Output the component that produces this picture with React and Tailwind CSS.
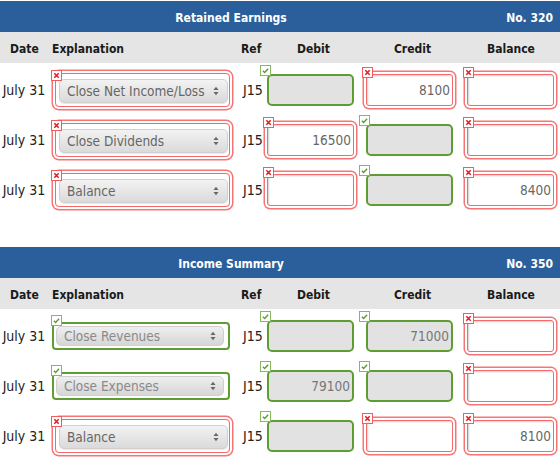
import React from "react";

const FONT = { fontFamily: '"DejaVu Sans Condensed", "DejaVu Sans", Verdana, sans-serif' };

function Badge({ ok, className }) {
  return (
    <span
      className={`absolute z-10 w-[11px] h-[11px] bg-white border flex items-center justify-center ${
        ok ? "border-[#86b85c]" : "border-[#f25c5c]"
      } ${className}`}
    >
      {ok ? (
        <svg viewBox="0 0 8 8" width="7" height="7">
          <path d="M1 4.3 L3 6.2 L7 2" stroke="#5b9a2e" strokeWidth="1.6" fill="none" />
        </svg>
      ) : (
        <svg viewBox="0 0 8 8" width="7" height="7">
          <path d="M1.5 1.5 L6.5 6.5 M6.5 1.5 L1.5 6.5" stroke="#e4161b" strokeWidth="1.7" fill="none" />
        </svg>
      )}
    </span>
  );
}

function Field({ ok, value }) {
  if (ok) {
    return (
      <div className="relative w-[87px] h-[32px]">
        <div className="w-full h-full rounded-[5px] border-2 border-[#5e9d31] bg-[#e2e2e2] flex items-center justify-end pr-[2px] text-[13.5px] text-[#777]">
          {value}
        </div>
        <Badge ok className="-left-[7px] -top-[9px]" />
      </div>
    );
  }
  return (
    <div className="relative w-[87px] h-[32px]">
      <div className="w-full h-full rounded-[3px] border border-[#f46a6a] bg-white shadow-[0_0_0_2px_#fff,0_0_0_3.5px_#f87474,inset_1px_1px_2px_rgba(0,0,0,0.18)] flex items-center justify-end pr-[2px] text-[13.5px] text-[#666]">
        {value}
      </div>
      <Badge className="-left-[4px] -top-[7px]" />
    </div>
  );
}

function Arrows() {
  return (
    <svg width="6" height="10" viewBox="0 0 6 10" className="shrink-0">
      <path d="M0.5 4 L3 0.8 L5.5 4 Z" fill="#666" />
      <path d="M0.5 6 L3 9.2 L5.5 6 Z" fill="#666" />
    </svg>
  );
}

function Select({ ok, text }) {
  if (ok) {
    return (
      <div className="relative w-[178px] h-[28px] rounded-[4px] border-2 border-[#5e9d31] p-[2px] pl-[2px] pr-[4px]">
        <div className="w-[168px] h-[20px] rounded-[5px] bg-gradient-to-b from-[#efefef] to-[#d6d6d6] border border-[#cfcfcf] flex items-center justify-between pl-[7px] pr-[7px] text-[13.5px] text-[#8a8a8a]">
          <span>{text}</span>
          <Arrows />
        </div>
        <Badge ok className="-left-[3px] -top-[9px]" />
      </div>
    );
  }
  return (
    <div className="relative ml-[3px] w-[175px] h-[34px] rounded-[4px] border border-[#f46a6a] shadow-[0_0_0_2px_#fff,0_0_0_3.5px_#f87474] pl-[3px] pt-[5px]">
      <div className="w-[169px] h-[24px] rounded-[5px] bg-gradient-to-b from-[#f3f3f3] to-[#dadada] border border-[#d0d0d0] shadow-[0_1px_1px_rgba(0,0,0,0.1)] flex items-center justify-between pl-[7px] pr-[8px] text-[13.5px] text-[#666]">
        <span>{text}</span>
        <Arrows />
      </div>
      <Badge className="-left-[5px] -top-[4px]" />
    </div>
  );
}

const GRID = "grid grid-cols-[52px_186px_26px_99px_99px_98px]";

function Row({ exp, debit, credit, balance }) {
  return (
    <div className={`${GRID} h-[50px] items-center`}>
      <div className="pr-[4px] text-center text-[14px] text-[#222] whitespace-nowrap">July 31</div>
      <div>
        <Select ok={exp.ok} text={exp.text} />
      </div>
      <div className="pl-[5px] text-[14px] text-[#222]">J15</div>
      <div className="pl-[3px]">
        <Field {...debit} />
      </div>
      <div className="pl-[3px]">
        <Field {...credit} />
      </div>
      <div className="pl-[5px]">
        <Field {...balance} />
      </div>
    </div>
  );
}

function Table({ title, no, rows, className }) {
  return (
    <div className={className}>
      <div className="h-[31px] bg-[#2b5f9b] flex items-center pt-[3px] text-white font-bold text-[12px]">
        <div className="w-[462px] text-center">{title}</div>
        <div className="flex-1 text-right pr-[7px]">{no}</div>
      </div>
      <div className={`${GRID} h-[31px] pt-[3px] bg-[#e5e5e5] items-center font-bold text-[12px] text-[#1a1a1a]`}>
        <div className="pl-[10px]">Date</div>
        <div>Explanation</div>
        <div className="pl-[3px]">Ref</div>
        <div className="text-center">Debit</div>
        <div className="text-center">Credit</div>
        <div className="text-center">Balance</div>
      </div>
      <div className="pt-[2px]">
        {rows.map((r, i) => (
          <Row key={i} {...r} />
        ))}
      </div>
    </div>
  );
}

export default function App() {
  const t1 = [
    {
      exp: { ok: false, text: "Close Net Income/Loss" },
      debit: { ok: true, value: "" },
      credit: { ok: false, value: "8100" },
      balance: { ok: false, value: "" },
    },
    {
      exp: { ok: false, text: "Close Dividends" },
      debit: { ok: false, value: "16500" },
      credit: { ok: true, value: "" },
      balance: { ok: false, value: "" },
    },
    {
      exp: { ok: false, text: "Balance" },
      debit: { ok: false, value: "" },
      credit: { ok: true, value: "" },
      balance: { ok: false, value: "8400" },
    },
  ];
  const t2 = [
    {
      exp: { ok: true, text: "Close Revenues" },
      debit: { ok: true, value: "" },
      credit: { ok: true, value: "71000" },
      balance: { ok: false, value: "" },
    },
    {
      exp: { ok: true, text: "Close Expenses" },
      debit: { ok: true, value: "79100" },
      credit: { ok: true, value: "" },
      balance: { ok: false, value: "" },
    },
    {
      exp: { ok: false, text: "Balance" },
      debit: { ok: true, value: "" },
      credit: { ok: false, value: "" },
      balance: { ok: false, value: "8100" },
    },
  ];
  return (
    <div className="w-[560px] h-[460px] bg-white overflow-hidden pt-px" style={FONT}>
      <Table title="Retained Earnings" no="No. 320" rows={t1} />
      <Table title="Income Summary" no="No. 350" rows={t2} className="mt-[32px]" />
    </div>
  );
}
